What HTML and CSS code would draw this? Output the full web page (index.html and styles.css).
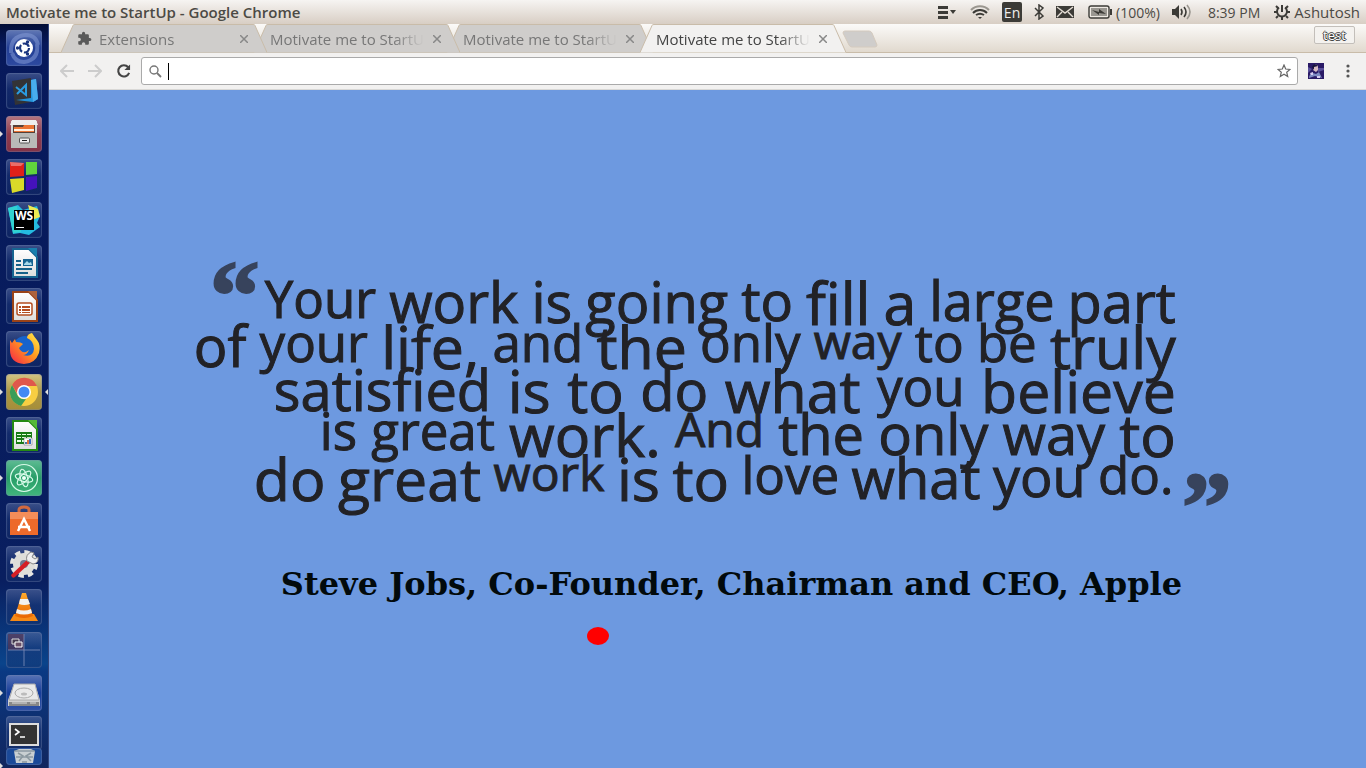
FILE: index.html
```html
<!DOCTYPE html>
<html lang="en">
<head>
<meta charset="utf-8">
<title>Motivate me to StartUp - Google Chrome</title>
<link rel="stylesheet" href="styles.css">
</head>
<body>
<svg class="defs" aria-hidden="true">
  <defs>
    <linearGradient id="paper" x1="0" y1="0" x2="0" y2="1"><stop offset="0" stop-color="#fff"/><stop offset="1" stop-color="#ddd"/></linearGradient>
    <linearGradient id="fox" x1="1" y1="0" x2="0" y2="1"><stop offset="0" stop-color="#fff44f"/><stop offset=".45" stop-color="#ff9a1f"/><stop offset="1" stop-color="#f5204a"/></linearGradient>
    <linearGradient id="vlc" x1="0" y1="0" x2="0" y2="1"><stop offset="0" stop-color="#ffab2e"/><stop offset="1" stop-color="#e86400"/></linearGradient>
  </defs>
</svg>
<header class="panel">
  <h1 class="panel-title">Motivate me to StartUp - Google Chrome</h1>
  <div class="indicators">
    <button class="ind" aria-label="Menu"><svg width="20" height="16" viewBox="0 0 20 16" fill="#3c3b37"><path d="M0 2h10v3H0zM0 7h10v3H0zM0 12h10v3H0zM12 6h6l-3 4z"/></svg></button>
    <button class="ind" aria-label="Network"><svg width="20" height="16" viewBox="0 0 20 16" fill="none" stroke="#3c3b37" stroke-width="2"><path d="M1 6c5-5 13-5 18 0" stroke="#9a968f"/><path d="M3 9c4-4 10-4 14 0"/><path d="M6 11c3-2 5-2 8 0"/><path d="M8 13l2 2 2-2z" fill="#3c3b37" stroke="none"/></svg></button>
    <button class="ind lang">En</button>
    <button class="ind" aria-label="Bluetooth"><svg width="10" height="16" viewBox="0 0 10 16" fill="none" stroke="#3c3b37" stroke-width="1.5"><path d="M1 4l8 8-4 3V1l4 3-8 8"/></svg></button>
    <button class="ind" aria-label="Messages"><svg width="18" height="14" viewBox="0 0 18 14"><path d="M0 1h18v12H0z" fill="#3c3b37"/><path d="M1 2l8 6 8-6M1 12l5-5M17 12l-5-5" stroke="#e5ded6" stroke-width="1.4" fill="none"/></svg></button>
    <button class="ind battery"><svg width="24" height="14" viewBox="0 0 24 14"><rect x="1" y="1" width="20" height="12" rx="2" fill="#eee9e3" stroke="#3c3b37" stroke-width="1.4"/><path d="M3 3h16v8H3z" fill="#9a9791"/><path d="M22 4h2v6h-2z" fill="#3c3b37"/><path d="M4 5l7 2V4l7 5-7-1v2z" fill="#3c3b37"/></svg>(100%)</button>
    <button class="ind sound" aria-label="Sound"><svg width="20" height="16" viewBox="0 0 20 16" fill="none" stroke="#3c3b37" stroke-width="1.6"><path d="M0 5h3l4-4v14l-4-4H0z" fill="#3c3b37" stroke="none"/><path d="M9 5q2 3 0 6M12 3q4 5 0 10"/><path d="M15 1q6 7 0 14" stroke="#9a968f"/></svg></button>
    <button class="ind clock">8:39 PM</button>
    <button class="ind user"><svg width="16" height="16" viewBox="0 0 16 16" fill="none" stroke="#3c3b37" stroke-width="2"><path d="M5 3.500a5 5 0 1 0 6 0M8 1v7"/><path d="M0 8h3M13 8h3M2 2l2 2M14 2l-2 2M2 14l2-2M14 14l-2-2M8 13v3"/></svg>Ashutosh</button>
  </div>
</header>
<div class="desktop">
  <nav class="launcher" aria-label="Launcher">
    <button class="tile dash" aria-label="Search"><svg viewBox="0 0 36 36"><path d="M5 23Q4 6 20 5q10 0 12 10M31 14q2 16-13 18Q9 32 6 23" fill="none" stroke="#8ba2dc" stroke-width="4" opacity=".5"/><circle cx="18" cy="18" r="9" fill="#fff"/><circle cx="18.500" cy="18" r="4.500" fill="none" stroke="#19347f" stroke-width="2.2" stroke-dasharray="7.500 1.920"/><g fill="#19347f"><circle cx="11.500" cy="18" r="1.700"/><circle cx="21.500" cy="12" r="1.700"/><circle cx="21.500" cy="24" r="1.700"/></g></svg></button>
    <button class="tile" aria-label="Visual Studio Code"><svg viewBox="0 0 36 36"><path d="M6 8l19-3v24L9 32z" fill="#333336"/><path d="M25 7l5-1 2 20-5 3-17-2 15-2z" fill="#2494dc"/><path d="M25 7l5-1 2 20-5 3z" fill="#48acec"/><path d="M10 14l10 8V12l-9 9" fill="none" stroke="#2b9be0" stroke-width="2"/></svg></button>
    <button class="tile files running" aria-label="Files"><svg viewBox="0 0 36 36"><path d="M5 5h26v27H5z" fill="#d8d8d5"/><path d="M6 4h24l2 5H4z" fill="#eee"/><path d="M7 9h22v8H7z" fill="#554038"/><path d="M8 11h9l1-2h10v7H8z" fill="#eb7434"/><path d="M8 13h20v2H8z" fill="#fff0df"/><path d="M5 17h26v15H5z" fill="#b9bab7"/><rect x="13.500" y="22" width="10" height="5" rx="1" fill="#eee" stroke="#555"/><path d="M16 24h5v1h-5z" fill="#222"/></svg></button>
    <button class="tile" aria-label="Code Blocks"><svg viewBox="0 0 36 36"><path d="M4 3l14 1v13L4 18z" fill="#df2019"/><path d="M20 3h11v12l-11 1z" fill="#61d33d"/><path d="M4 20l14-1v12L6 34z" fill="#dada29"/><path d="M20 18l11-1v12l-11 3z" fill="#4512bc"/><path d="M4 3l14 1-3 3H5z" fill="#fff" opacity=".35"/></svg></button>
    <button class="tile" aria-label="WebStorm"><svg viewBox="0 0 36 36"><path d="M2 6l10-3 5 5L31 4l3 10-3 7 3 4-11 8-9-2-7 1z" fill="#24bbe0"/><path d="M22 3l10 4 2 8-8 3z" fill="#edea52"/><path d="M2 6l9-2 4 26-8 1z" fill="#31d2d1"/><path d="M8 8h20v20H8z" fill="#000"/><path d="M10 25h8v1h-8z" fill="#fff"/><text x="9" y="18" class="ws">WS</text></svg></button>
    <button class="tile" aria-label="Writer"><svg viewBox="0 0 36 36"><path d="M7 4h16l8 8v20H7z" fill="url(#paper)" stroke="#176491" stroke-width="2"/><path d="M22 3h9v9z" fill="#1a80ae"/><path d="M10 15h5v2h-5zM10 19h5v2h-5zM10 23h16v2H10zM10 27h12v2H10z" fill="#166189"/><path d="M17 14h10v7H17z" fill="#176491"/><path d="M18 19l3-3 2 2 2-1 1 3h-8z" fill="#a9d8e8"/></svg></button>
    <button class="tile" aria-label="Impress"><svg viewBox="0 0 36 36"><path d="M7 4h16l8 8v21H7z" fill="url(#paper)" stroke="#9a4217" stroke-width="2"/><path d="M22 3h9v9z" fill="#ad623c"/><rect x="11" y="15" width="15" height="12" rx="2" fill="#fff" stroke="#b44d20" stroke-width="1.500"/><path d="M13 18h2v2h-2zM16 18h8v2h-8zM13 21h2v2h-2zM16 21h8v2h-8zM13 24h2v1h-2zM16 24h8v1h-8z" fill="#b44d20"/></svg></button>
    <button class="tile" aria-label="Firefox"><svg viewBox="0 0 36 36"><circle cx="19" cy="17" r="12" fill="#1763cb"/><path d="M4 9l2 3 3-4 1 3q5 0 7 2l-4 4q2 5 7 4l3-2q-2 5-6 5 10 3 11-6 0-8-7-11 0-4 5-5 3 5 5 7 4 5 2 13-4 11-15 11Q4 32 4 19z" fill="url(#fox)"/></svg></button>
    <button class="tile chrome running active" aria-label="Chrome"><svg viewBox="0 0 36 36"><circle cx="18" cy="18" r="14" fill="#f8ce42"/><path d="M6 11A14 14 0 0 1 31 12H18a7 7 0 0 0-6 9z" fill="#df584c"/><path d="M6 11l6 11q3 4 8 3l-5 7A14 14 0 0 1 6 11z" fill="#3a9d57"/><circle cx="18" cy="18" r="7" fill="#fff"/><circle cx="18" cy="18" r="5.500" fill="#4289f4"/></svg></button>
    <button class="tile" aria-label="Calc"><svg viewBox="0 0 36 36"><path d="M7 4h16l8 8v21H7z" fill="url(#paper)" stroke="#258a13" stroke-width="2"/><path d="M22 3h9v9z" fill="#55b839"/><path d="M10 15h16v12H10z" fill="#187b16"/><path d="M11 17h4v1h-4zM16 17h4v1h-4zM21 17h4v1h-4zM11 20h4v1h-4zM16 20h4v1h-4zM21 20h4v1h-4zM11 23h4v2h-4zM16 23h4v2h-4z" fill="#e5ffe0"/><path d="M18 21h8v7h-8z" fill="#fff" stroke="#666" stroke-width=".500"/><path d="M19 25h2v2h-2z" fill="#4b75ab"/><path d="M21 23h2v4h-2z" fill="#e67233"/><path d="M23 22h2v5h-2z" fill="#316ac3"/></svg></button>
    <button class="tile atom running" aria-label="Atom"><svg viewBox="0 0 36 36" fill="none" stroke="#d8fae9" stroke-width="1.2"><circle cx="18" cy="18" r="13.500"/><ellipse cx="18" cy="18" rx="9" ry="3.500" transform="rotate(15 18 18)"/><ellipse cx="18" cy="18" rx="9" ry="3.500" transform="rotate(75 18 18)"/><ellipse cx="18" cy="18" rx="9" ry="3.500" transform="rotate(135 18 18)"/><circle cx="18" cy="18" r="1.500" fill="#fff"/></svg></button>
    <button class="tile" aria-label="Software"><svg viewBox="0 0 36 36"><path d="M13 11V7q0-3 5-3t5 3v4" fill="none" stroke="#d1693f" stroke-width="3"/><path d="M4 9h28v23H4z" fill="#ed6a2b"/><path d="M4 9h28v7H4z" fill="#f48d59"/><path d="M12 28l6-12 6 12M12 24h12" fill="none" stroke="#fff" stroke-width="2.500"/></svg></button>
    <button class="tile" aria-label="Settings"><svg viewBox="0 0 36 36"><circle cx="18" cy="18" r="12" fill="none" stroke="#e5e5e1" stroke-width="4" stroke-dasharray="5.400 4.020"/><circle cx="18" cy="18" r="11" fill="#deded9"/><circle cx="18" cy="18" r="4" fill="#6f7790"/><path d="M5 29l17-16 3 3L9 31q-3 2-4-2z" fill="#d51e25"/><path d="M21 15q-2-6 4-9l3 1-2 4 3 2 3-2q1 6-5 7z" fill="#eee" stroke="#888"/></svg></button>
    <button class="tile" aria-label="VLC"><svg viewBox="0 0 36 36"><path d="M8 25h20l4 7H4z" fill="#f58a16"/><path d="M16 4h4l7 23q-9 4-18 0z" fill="url(#vlc)"/><path d="M14 10h8l2 5q-6 2-11 0zM11 20q7 3 14 0l1 4q-8 3-16 0z" fill="#f2f2f0"/></svg></button>
    <button class="tile" aria-label="Workspaces"><svg viewBox="0 0 36 36"><path d="M2 2h16v16H2z" fill="#5e334c" opacity=".6"/><path d="M2 18h32M18 2v32" stroke="#8191ba" stroke-width=".800"/><path d="M6 7h7v5H6z" fill="#443a4f" stroke="#ddd"/><path d="M9 10h7v5H9z" fill="#694f66" stroke="#fff"/></svg></button>
    <button class="tile disk running" aria-label="Disk"><svg viewBox="0 0 36 36"><path d="M8 9h21l5 16v6H2v-6z" fill="#cfcfcf"/><path d="M8 9h21l4 16H3z" fill="#e9e9e9" stroke="#aaa"/><ellipse cx="18" cy="18" rx="9" ry="5" fill="none" stroke="#aaa"/><ellipse cx="18" cy="19" rx="3" ry="1.500" fill="#bbb"/><path d="M3 27h30v4H3z" fill="#888"/><path d="M6 28h15M24 28h6" stroke="#ddd"/></svg></button>
    <button class="tile terminal" aria-label="Terminal"><svg viewBox="0 0 36 32"><path d="M4 7h28v21H4z" fill="#333" stroke="#ddd" stroke-width="2"/><path d="M9 12l4 3-4 3M14 20h5" fill="none" stroke="#fff" stroke-width="1.600"/></svg></button>
    <button class="tile trash running" aria-label="Trash"><svg viewBox="0 0 36 17"><path d="M8 3l5-2h12l4 2-2 12H10z" fill="#c9cfd2"/><path d="M8 3h21M10 9h17" stroke="#6e7e8b" fill="none"/><path d="M12 5l5 3-4 5M25 5l-5 3 5 5M16 14h5" stroke="#8a979f" stroke-width="1.500" fill="none"/></svg></button>
  </nav>
  <div class="window">
    <div class="tabs">
      <div class="tab first"><svg class="tab-shape" viewBox="0 0 206 29" preserveAspectRatio="none"><path d="M0 28.500L12 1.500Q12 .500 14 .500H192Q194 .500 194 1.500L206 28.500"/></svg><svg class="puzzle" width="15" height="15" viewBox="0 0 24 24"><path fill="#5a5a5a" d="M20.500 11H19V7c0-1.100-.9-2-2-2h-4V3.500a2.500 2.500 0 0 0-5 0V5H4c-1.100 0-2 .9-2 2v3.800h1.500a2.700 2.700 0 0 1 0 5.400H2V20c0 1.100.9 2 2 2h3.800v-1.500a2.700 2.700 0 0 1 5.400 0V22H17c1.100 0 2-.9 2-2v-4h1.500a2.500 2.500 0 0 0 0-5z"/></svg><span class="tab-text">Extensions</span><button class="close" aria-label="Close tab"><svg viewBox="0 0 8 8"><path d="M0 0l8 8M8 0L0 8"/></svg></button></div>
      <div class="tab second"><svg class="tab-shape" viewBox="0 0 206 29" preserveAspectRatio="none"><path d="M0 28.500L12 1.500Q12 .500 14 .500H192Q194 .500 194 1.500L206 28.500"/></svg><span class="tab-text">Motivate me to StartUp</span><button class="close" aria-label="Close tab"><svg viewBox="0 0 8 8"><path d="M0 0l8 8M8 0L0 8"/></svg></button></div>
      <div class="tab"><svg class="tab-shape" viewBox="0 0 206 29" preserveAspectRatio="none"><path d="M0 28.500L12 1.500Q12 .500 14 .500H192Q194 .500 194 1.500L206 28.500"/></svg><span class="tab-text">Motivate me to StartUp</span><button class="close" aria-label="Close tab"><svg viewBox="0 0 8 8"><path d="M0 0l8 8M8 0L0 8"/></svg></button></div>
      <div class="tab current"><svg class="tab-shape" viewBox="0 0 206 29" preserveAspectRatio="none"><path d="M0 28.500L12 1.500Q12 .500 14 .500H192Q194 .500 194 1.500L206 28.500"/></svg><span class="tab-text">Motivate me to StartUp</span><button class="close" aria-label="Close tab"><svg viewBox="0 0 8 8"><path d="M0 0l8 8M8 0L0 8"/></svg></button></div>
      <button class="new-tab" aria-label="New tab"><svg width="36" height="18" viewBox="0 0 36 18"><path d="M3 1h24q2 0 3 2l5 12q0 2-2 2H10q-2 0-3-2L1 3q0-2 2-2z" fill="#cfcdcb" stroke="#d4cabe"/></svg></button>
      <button class="profile">test</button>
    </div>
    <div class="toolbar">
      <button class="nav" aria-label="Back"><svg width="14" height="14" viewBox="0 0 14 14"><path d="M14 7H1M7 1L1 7l6 6" fill="none" stroke="#ccc" stroke-width="2"/></svg></button>
      <button class="nav" aria-label="Forward"><svg width="14" height="14" viewBox="0 0 14 14"><path d="M0 7h13M7 1l6 6-6 6" fill="none" stroke="#ccc" stroke-width="2"/></svg></button>
      <button class="nav reload" aria-label="Reload"><svg width="15" height="16" viewBox="0 0 16 16"><path d="M13 4a6 6 0 1 0 1 6" fill="none" stroke="#444" stroke-width="2.200"/><path d="M15 1v6H9z" fill="#444"/></svg></button>
      <div class="omnibox">
        <svg width="13" height="13" viewBox="0 0 13 13" fill="none" stroke="#777"><circle cx="5" cy="5" r="4" stroke-width="1.400"/><path d="M8 8l4 4" stroke-width="1.800"/></svg>
        <span class="caret"></span>
        <input type="text" aria-label="Address and search bar">
        <button class="star" aria-label="Bookmark"><svg width="14" height="14" viewBox="0 0 14 14"><path d="M7 1l1.700 4 4.300.4-3.300 2.800 1 4.300L7 10.200l-3.700 2.300 1-4.300L1 5.400 5.300 5z" fill="none" stroke="#666" stroke-width="1.200"/></svg></button>
      </div>
      <button class="ext" aria-label="Extension"><svg width="16" height="16" viewBox="0 0 16 16"><path d="M0 0h16v16H0z" fill="#2a1a66"/><path d="M10 5h6v2l-6 2zM0 4l4 2-4 4z" fill="#59509a"/><path d="M5 3q3-3 5 0v4L8 9 5 7z" fill="#d5b9c1"/><path d="M4 4q2-5 6-1L6 4v3z" fill="#16133a"/><path d="M1 15q0-4 4-5l3 1 3-2 3 6-7-2z" fill="#7f8bc3"/><path d="M2 10l3-1v3H3zM9 13h3v2H9z" fill="#d7cef2"/></svg></button>
      <button class="menu" aria-label="Menu"><svg width="4" height="14" viewBox="0 0 4 14" fill="#555"><circle cx="2" cy="2" r="1.600"/><circle cx="2" cy="7" r="1.600"/><circle cx="2" cy="12" r="1.600"/></svg></button>
    </div>
    <main class="page">
      <figure class="quote">
        <blockquote>
          <div class="row r1"><span class="mark">“</span><span class="s">Your</span><span class="l">work</span><span class="l">is</span><span class="l">going</span><span class="m">to</span><span class="xl">fill</span><span class="xl">a</span><span class="m">large</span><span class="l">part</span></div>
          <div class="row r2"><span class="l">of</span><span class="s">your</span><span class="xl">life,</span><span class="s">and</span><span class="xl">the</span><span class="s">only</span><span class="xs">way</span><span class="s">to</span><span class="s">be</span><span class="xl">truly</span></div>
          <div class="row r3"><span class="l">satisfied</span><span class="xl">is</span><span class="xl">to</span><span class="l">do</span><span class="xl">what</span><span class="s">you</span><span class="xl">believe</span></div>
          <div class="row r4"><span class="s">is</span><span class="s">great</span><span class="xl">work.</span><span class="xs">And</span><span class="l">the</span><span class="l">only</span><span class="l">way</span><span class="xl">to</span></div>
          <div class="row r5"><span class="xl">do</span><span class="xl">great</span><span class="xs">work</span><span class="xl">is</span><span class="xl">to</span><span class="s">love</span><span class="l">what</span><span class="m">you</span><span class="s">do.</span><span class="mark end">”</span></div>
        </blockquote>
        <figcaption>Steve Jobs, Co-Founder, Chairman and CEO, Apple</figcaption>
      </figure>
      <div class="dot"></div>
    </main>
  </div>
</div>
</body>
</html>
```
FILE: styles.css
```css
* { box-sizing: border-box; }
body {
  margin: 0;
  height: 100vh;
  overflow: hidden;
  display: flex;
  flex-direction: column;
  font: 15px "Open Sans", "Noto Sans", sans-serif;
  color: #4c4a45;
}
button {
  border: 0;
  padding: 0;
  background: none;
  font: inherit;
  color: inherit;
}
svg { display: block; }
.defs { position: absolute; width: 0; height: 0; }

.panel {
  flex: none;
  height: 24px;
  padding: 0 6px;
  display: flex;
  align-items: center;
  justify-content: space-between;
  background: linear-gradient(#f6f4f2, #d8cec4);
}
.panel-title { margin: 0; font-size: 15px; font-weight: 600; }
.indicators { display: flex; align-items: center; gap: 12px; font-size: 14px; }
.ind { display: flex; align-items: center; gap: 4px; white-space: nowrap; }
.battery { margin-left: 2px; }
.clock { margin: 0 2px 0 4px; }
.user { font-size: 15px; }
.lang {
  width: 20px;
  height: 20px;
  justify-content: center;
  border-radius: 2px;
  background: #3c3b37;
  color: #eee;
}

.desktop { flex: 1; min-height: 0; display: flex; }
.launcher {
  flex: none;
  width: 49px;
  padding-top: 6px;
  display: flex;
  flex-direction: column;
  align-items: center;
  gap: 7px;
  background: linear-gradient(#020d35 0, #07195b 20px, #091f60 75%, #0a448b 86%, #0a3983 87%, #11265e);
  border-right: 1px solid #31457c;
}
.tile {
  position: relative;
  flex: none;
  width: 36px;
  height: 36px;
  border-radius: 4px;
  background: linear-gradient(#667aad88, #1f3b7b77 45%, #17316a66);
  box-shadow: inset 0 0 1px 1px #7285ad66;
}
.tile svg { width: 100%; height: 100%; }
.dash { background: linear-gradient(#6178b5, #213d94 50%, #2e4aa0); }
.files { background: linear-gradient(#b67680, #8e3c4d 50%, #843145); }
.chrome { background: linear-gradient(#d4c583, #ab9746 50%, #a68e38); }
.atom { background: linear-gradient(#5fbc94, #269d67 50%, #42b77d); }
.disk { background: linear-gradient(#5873b5, #143b99 50%, #3052a5); }
.terminal { height: 34px; margin-top: -2px; }
.trash { height: 17px; margin-top: -9px; background: #1b4998; }
.ws { font: 700 12px "Open Sans", sans-serif; fill: #fff; }
.running::before, .active::after {
  content: "";
  position: absolute;
  top: 15px;
  left: -6px;
  border: 3px solid transparent;
  border-left-color: #ddd;
  border-right-width: 0;
}
.active::after {
  left: auto;
  right: -6px;
  border-width: 3px 3px 3px 0;
  border-right-color: #ddd;
}

.window { flex: 1; min-width: 0; display: flex; flex-direction: column; }
.tabs {
  flex: none;
  height: 29px;
  padding: 0 11px 0 12px;
  display: flex;
  background: linear-gradient(#fbfaf8, #e0d8cd);
  box-shadow: inset 0 -1px #c9bca9;
}
.tab {
  position: relative;
  flex: 0 1 206px;
  min-width: 0;
  margin-right: -13px;
  padding: 0 19px 0 16px;
  display: flex;
  align-items: center;
  color: #777;
}
.first { z-index: 3; }
.second { z-index: 2; }
.current { z-index: 4; color: #444; }
.tab-shape {
  position: absolute;
  inset: 0;
  width: 100%;
  height: 100%;
  fill: #cfcdcb;
  stroke: #c9bca9;
}
.current .tab-shape { fill: #f2f1f0; }
.puzzle { position: relative; margin-right: 7px; }
.tab-text {
  position: relative;
  flex: 1;
  min-width: 0;
  overflow: hidden;
  white-space: nowrap;
  margin-right: 9px;
  -webkit-mask-image: linear-gradient(90deg, #000 80%, transparent);
  mask-image: linear-gradient(90deg, #000 80%, transparent);
}
.close { position: relative; flex: none; width: 8px; height: 8px; }
.close path { stroke: #888; stroke-width: 1.5; }
.new-tab { align-self: center; margin-left: 9px; }
.profile {
  width: 41px;
  height: 18px;
  margin: 2px 0 0 auto;
  border: 1px solid #c3bfba;
  border-radius: 2px;
  background: #f4f2ef;
  color: #fff;
  font-size: 13px;
  line-height: 14px;
  text-shadow: 1px 0 #444, -1px 0 #444, 0 1px #444, 0 -1px #444;
}
.toolbar {
  flex: none;
  height: 37px;
  padding: 0 16px 0 11px;
  display: flex;
  align-items: center;
  background: #f2f1f0;
  border-bottom: 1px solid #d9d8d6;
}
.nav { flex: none; width: 14px; margin-right: 14px; }
.reload { width: 15px; margin-right: 10px; }
.omnibox {
  flex: 1;
  height: 28px;
  padding: 0 6px 0 7px;
  display: flex;
  align-items: center;
  border: 1px solid #aaa;
  border-radius: 3px;
  background: #fff;
}
.caret { width: 1px; height: 17px; margin-left: 6px; background: #000; }
.omnibox input { flex: 1; min-width: 0; border: 0; outline: 0; font: inherit; }
.ext { margin: 0 22px 0 10px; }

.page { flex: 1; min-height: 0; padding-top: 183px; background: #6d99e0; }
.quote { width: 982px; max-width: 90%; margin: 0 0 0 11%; }
blockquote {
  margin: 0;
  color: #222226;
  font-variant-ligatures: none;
  -webkit-text-stroke: 1px #222226;
}
.row {
  height: 44px;
  display: flex;
  align-items: flex-start;
  justify-content: space-between;
  line-height: 1;
  white-space: nowrap;
}
.r1 { padding-left: 16px; }
.r3 { padding-left: 80px; }
.r4 { padding-left: 126px; }
.r5 { padding-left: 60px; margin-right: -56px; }
.xs { font-size: 48px; }
.s { font-size: 51px; }
.m { font-size: 54px; }
.l { font-size: 56px; }
.xl { font-size: 59px; }
.mark {
  margin: -27px -8px 0 0;
  color: #37435c;
  font: 700 100px/1 "Liberation Serif", serif;
  -webkit-text-stroke: 2px #37435c;
}
.end { margin: 8px 0 0 -4px; }
figcaption {
  margin: 73px 0 0 87px;
  color: #020a0c;
  font: 700 32px/36px "DejaVu Serif", serif;
  white-space: nowrap;
}
.dot {
  width: 22px;
  height: 18px;
  margin: 25px 0 0 538px;
  border-radius: 50%;
  background: #f00;
}
```
